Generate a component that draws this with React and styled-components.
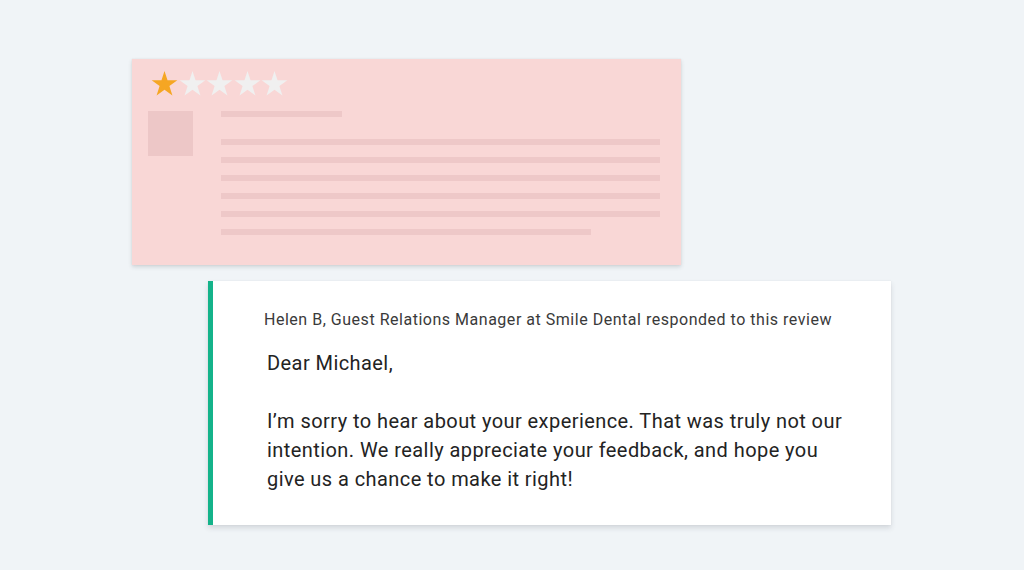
import React from 'react';
import styled, { createGlobalStyle } from 'styled-components';

const GlobalStyle = createGlobalStyle`
  html, body {
    margin: 0;
    padding: 0;
    background: #f0f4f7;
  }
  body {
    font-family: Roboto, "Noto Sans", Arial, sans-serif;
    -webkit-font-smoothing: antialiased;
  }
`;

const Page = styled.div`
  width: 1024px;
  height: 570px;
  padding: 59px 0 0 132px;
  box-sizing: border-box;
  overflow: hidden;
`;

const ReviewCard = styled.div`
  width: 549px;
  height: 206px;
  box-sizing: border-box;
  padding: 12px 0 0 16px;
  background: #f9d7d6;
  box-shadow: 0 2px 4px rgba(60, 70, 80, 0.18), 0 0 1px rgba(60, 70, 80, 0.12);
`;

const Stars = styled.div`
  display: flex;
  gap: 0.5px;
  margin-left: 3px;
  height: 26px;
`;

const ReviewBody = styled.div`
  display: flex;
  margin-top: 14px;
`;

const Avatar = styled.div`
  width: 45px;
  height: 45px;
  background: #edc7c7;
  flex-shrink: 0;
`;

const Lines = styled.div`
  display: flex;
  flex-direction: column;
  margin-left: 28px;
`;

const Line = styled.div`
  height: 6px;
  width: ${(p) => p.width}px;
  background: #eec8c8;
  margin-bottom: ${(p) => (p.first ? 22 : 12)}px;
`;

const ResponseCard = styled.div`
  margin: 16px 0 0 76px;
  width: 683px;
  height: 244px;
  box-sizing: border-box;
  border-left: 5px solid #14b38a;
  background: #ffffff;
  padding: 29px 0 0 51px;
  box-shadow: 0 3px 5px rgba(60, 70, 80, 0.16), 0 0 1px rgba(60, 70, 80, 0.1);
`;

const Responder = styled.div`
  font-size: 16px;
  line-height: 20px;
  color: #3a3a3a;
  letter-spacing: 0.52px;
`;

const Message = styled.p`
  margin: 19px 0 0 3px;
  width: 590px;
  font-size: 20px;
  line-height: 29px;
  letter-spacing: 0.43px;
  color: #232323;
`;

function Star({ filled }) {
  return (
    <svg width="27" height="26" viewBox="0 0 28 27">
      <polygon
        points="14,0 17.145,9.672 27.315,9.674 19.088,15.653 22.229,25.326 14,19.35 5.771,25.326 8.912,15.653 0.685,9.674 10.855,9.672"
        fill={filled ? '#f5a623' : '#f0f0f0'}
      />
    </svg>
  );
}

const lineWidths = [439, 439, 439, 439, 439, 370];

export default function App() {
  return (
    <>
      <GlobalStyle />
      <Page>
        <ReviewCard>
          <Stars>
            {[0, 1, 2, 3, 4].map((i) => (
              <Star key={i} filled={i === 0} />
            ))}
          </Stars>
          <ReviewBody>
            <Avatar />
            <Lines>
              <Line width={121} first />
              {lineWidths.map((w, i) => (
                <Line key={i} width={w} />
              ))}
            </Lines>
          </ReviewBody>
        </ReviewCard>
        <ResponseCard>
          <Responder>
            Helen B, Guest Relations Manager at Smile Dental responded to this review
          </Responder>
          <Message>
            Dear Michael,
            <br />
            <br />
            I’m sorry to hear about your experience. That was truly not our intention. We really
            appreciate your feedback, and hope you give us a chance to make it right!
          </Message>
        </ResponseCard>
      </Page>
    </>
  );
}
